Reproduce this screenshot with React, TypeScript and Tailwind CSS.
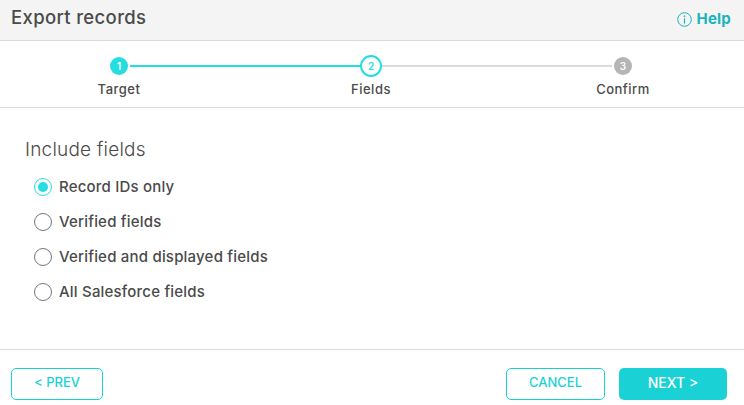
import React from 'react';

const options = ['Record IDs only', 'Verified fields', 'Verified and displayed fields', 'All Salesforce fields'];

const App: React.FC = () => {
  return (
    <div className="w-[744px] h-[405px] bg-white overflow-hidden flex flex-col font-['Inter','Liberation_Sans',sans-serif] text-[#4a4a4a]">
      <div className="h-[41px] shrink-0 bg-[#f4f4f4] border-b border-[#dcdcdc] flex justify-between pl-[11px] pr-[13px]">
        <h1 className="text-[18.5px] leading-[34px] font-medium tracking-[0.35px]">Export records</h1>
        <a className="mt-[10px] h-[19px] flex items-center gap-[5px] text-[#1ab5bd] text-[15px] font-bold tracking-[0.2px]">
          <svg width="15" height="15" viewBox="0 0 15 15" fill="none" stroke="#1ab5bd" strokeWidth="1">
            <circle cx="7.5" cy="7.5" r="6.8" />
            <path d="M7.5 6.3V11.6" strokeWidth="1.2" />
            <circle cx="7.5" cy="4.2" r="0.5" fill="#1ab5bd" />
          </svg>
          Help
        </a>
      </div>

      <div className="h-[67px] shrink-0 border-b border-[#dcdcdc]">
        <div className="flex items-center pl-[110px] pt-[14px]">
          <div className="w-[18px] h-[18px] rounded-full bg-[#26dde2] text-white text-[10px] font-semibold flex items-center justify-center shrink-0">1</div>
          <div className="w-[230px] h-[2px] ml-[2px] bg-[#26dde2]" />
          <div className="w-[22px] h-[22px] rounded-full border-2 border-[#26dde2] text-[#26dde2] text-[10px] font-semibold flex items-center justify-center shrink-0">2</div>
          <div className="w-[230px] h-[2px] bg-[#dcdcdc]" />
          <div className="w-[18px] h-[18px] ml-[2px] rounded-full bg-[#b5b5b5] text-white text-[10px] font-semibold flex items-center justify-center shrink-0">3</div>
        </div>
        <div className="flex gap-[132px] pl-[59px] mt-[4px] text-[13px] leading-[16px] font-medium tracking-[0.5px]">
          <span className="w-[120px] text-center">Target</span>
          <span className="w-[120px] text-center">Fields</span>
          <span className="w-[120px] text-center">Confirm</span>
        </div>
      </div>

      <div className="flex-1 pl-[25px] pt-[31px]">
        <h2 className="text-[19px] leading-[22px] font-light tracking-[0.2px]">Include fields</h2>
        <div className="mt-[17px] pl-[9px] flex flex-col gap-[17px]">
          {options.map((label, i) => (
            <label key={label} className="flex items-center gap-[7px] h-[18px] text-[15px] font-medium tracking-[0.2px]">
              <span className={`w-[18px] h-[18px] rounded-full border flex items-center justify-center shrink-0 ${i === 0 ? 'border-[#26dde2]' : 'border-[#777777]'}`}>
                {i === 0 && <span className="w-[10px] h-[10px] rounded-full bg-[#26dde2]" />}
              </span>
              {label}
            </label>
          ))}
        </div>
      </div>

      <div className="h-[56px] shrink-0 border-t border-[#dcdcdc] flex items-start justify-between pl-[11px] pr-[17px] pt-[18px]">
        <button className="w-[92px] h-[32px] pb-[2px] rounded-[5px] border border-[#1ad1d6] text-[#1ad1d6] text-[13px] font-medium">&lt; PREV</button>
        <div className="flex gap-[14px]">
          <button className="w-[99px] h-[32px] pb-[2px] rounded-[5px] border border-[#1ad1d6] text-[#1ad1d6] text-[13px] font-medium">CANCEL</button>
          <button className="w-[108px] h-[32px] pb-[3px] rounded-[5px] bg-[#1ad1d6] text-white text-[14px] font-medium">NEXT &gt;</button>
        </div>
      </div>
    </div>
  );
};

export default App;
